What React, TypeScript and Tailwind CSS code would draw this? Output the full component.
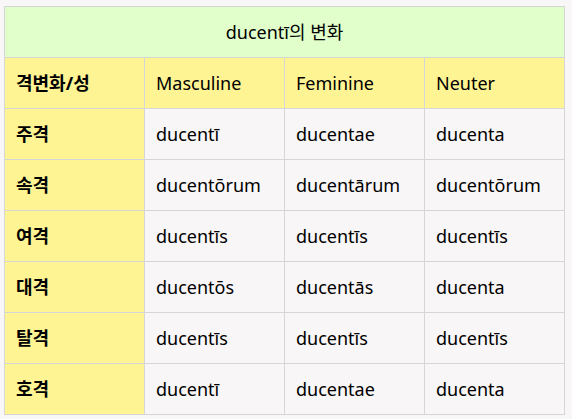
const rows: [string, string, string, string][] = [
  ["주격", "ducentī", "ducentae", "ducenta"],
  ["속격", "ducentōrum", "ducentārum", "ducentōrum"],
  ["여격", "ducentīs", "ducentīs", "ducentīs"],
  ["대격", "ducentōs", "ducentās", "ducenta"],
  ["탈격", "ducentīs", "ducentīs", "ducentīs"],
  ["호격", "ducentī", "ducentae", "ducenta"],
];

const font = { fontFamily: '"Noto Sans", "Noto Sans CJK KR", sans-serif' };

export default function App() {
  return (
    <div className="min-h-[419px] w-[572px] bg-[#f8f6f6] pl-[4px] pt-[6px] text-[18px] text-black" style={font}>
      <table className="w-[561px] table-fixed border-collapse">
        <tbody>
          <tr>
            <td colSpan={4} className="h-[51px] border border-[#d6d6d6] bg-[#e1ffcb] text-center align-middle">
              ducentī의 변화
            </td>
          </tr>
          <tr>
            <td className="h-[51px] w-[140px] border border-[#d6d6d6] bg-[#fff494] pl-[11px] font-bold">격변화/성</td>
            <td className="h-[51px] w-[140px] border border-[#d6d6d6] bg-[#fff494] pl-[11px]">Masculine</td>
            <td className="h-[51px] w-[140px] border border-[#d6d6d6] bg-[#fff494] pl-[11px]">Feminine</td>
            <td className="h-[51px] border border-[#d6d6d6] bg-[#fff494] pl-[11px]">Neuter</td>
          </tr>
          {rows.map((r) => (
            <tr key={r[0]}>
              <td className="h-[51px] border border-[#d6d6d6] bg-[#fff494] pl-[11px] font-bold">{r[0]}</td>
              <td className="h-[51px] border border-[#d6d6d6] bg-[#f8f6f6] pl-[11px]">{r[1]}</td>
              <td className="h-[51px] border border-[#d6d6d6] bg-[#f8f6f6] pl-[11px]">{r[2]}</td>
              <td className="h-[51px] border border-[#d6d6d6] bg-[#f8f6f6] pl-[11px]">{r[3]}</td>
            </tr>
          ))}
        </tbody>
      </table>
    </div>
  );
}
